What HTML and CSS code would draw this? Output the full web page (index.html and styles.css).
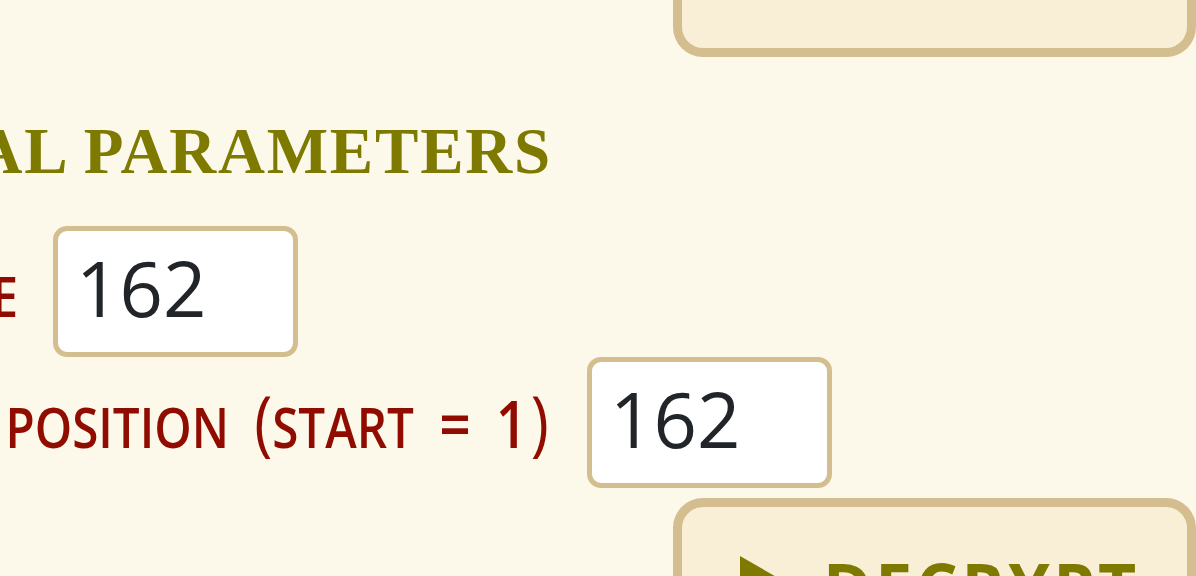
FILE: index.html
```html
<!DOCTYPE html>
<html lang="en">
<head>
<meta charset="utf-8">
<title>Additional parameters</title>
<link rel="stylesheet" href="styles.css">
</head>
<body>
  <div class="panel-top"></div>

  <h2 class="heading"><span>Additional parameters</span></h2>

  <div class="field field-short">
    <label class="label" for="shift"><span class="label-text">Shift value</span></label>
    <input class="input" id="shift" type="text" value="162">
  </div>

  <div class="field field-long">
    <label class="label" for="pos"><span class="label-text">Letter position <span class="paren">(</span>start <span class="num">=</span> <span class="num num-one">1</span><span class="paren">)</span></span></label>
    <input class="input" id="pos" type="text" value="162">
  </div>

  <button class="action" type="button">
    <svg class="play" width="52" height="60" viewBox="0 0 52 60" aria-hidden="true"><polygon points="0,0 52,30 0,60" fill="#7e7a00"/></svg>
    <span class="action-text">Decrypt</span>
  </button>
</body>
</html>
```

FILE: styles.css
```css
html, body {
  margin: 0;
  padding: 0;
}

body {
  width: 1196px;
  height: 576px;
  overflow: hidden;
  background: #fcf8ea;
  font-family: "Open Sans", "Liberation Sans", sans-serif;
}

.panel-top {
  box-sizing: border-box;
  margin-left: 673px;
  height: 57px;
  border: 9px solid #d4be90;
  border-top: 0;
  border-radius: 0 0 30px 30px;
  background: #f8efd6;
}

.heading {
  display: flex;
  justify-content: flex-end;
  width: 552px;
  margin: 57px 0 0 0;
  font-family: "Liberation Serif", "Times New Roman", serif;
  font-weight: bold;
  font-size: 65px;
  line-height: 74px;
  letter-spacing: 1.8px;
  text-transform: uppercase;
  color: #7e7a00;
  white-space: nowrap;
}

.field {
  display: flex;
  align-items: baseline;
}

.field-short {
  margin-top: 38px;
}

.label {
  display: flex;
  justify-content: flex-end;
  flex: none;
  box-sizing: border-box;
  white-space: nowrap;
  font-size: 56px;
  font-weight: 600;
  line-height: 1;
  word-spacing: 15px;
  text-transform: uppercase;
  color: #910c00;
}

.label-text {
  display: inline-block;
  transform: scaleX(0.85);
  transform-origin: right center;
}

.field-short .label {
  width: 53px;
  padding-right: 35px;
}

.field-long .label {
  width: 587px;
  padding-right: 38px;
}

.paren {
  font-size: 72px;
  font-weight: 500;
}

.num {
  font-size: 65px;
}

.num-one {
  margin-right: 4px;
}

.input {
  box-sizing: border-box;
  width: 245px;
  height: 131px;
  margin: 0;
  padding: 0 18px 8px;
  border: 5px solid #d4be90;
  border-radius: 14px;
  background: #ffffff;
  font-family: "Open Sans", "Noto Sans", sans-serif;
  font-size: 76px;
  font-weight: 500;
  color: #212529;
  outline: none;
}

.action {
  display: flex;
  align-items: flex-start;
  gap: 31px;
  box-sizing: border-box;
  width: 523px;
  height: 160px;
  margin: 10px 0 0 673px;
  padding: 47px 0 0 58px;
  border: 9px solid #d4be90;
  border-radius: 30px;
  background: #f8efd6;
  cursor: pointer;
}

.play {
  flex: none;
  margin-top: 2px;
}

.action-text {
  font-family: "Open Sans", "Liberation Sans", sans-serif;
  font-weight: bold;
  font-size: 66px;
  line-height: 64px;
  letter-spacing: 3.5px;
  text-transform: uppercase;
  color: #7e7a00;
}
```
